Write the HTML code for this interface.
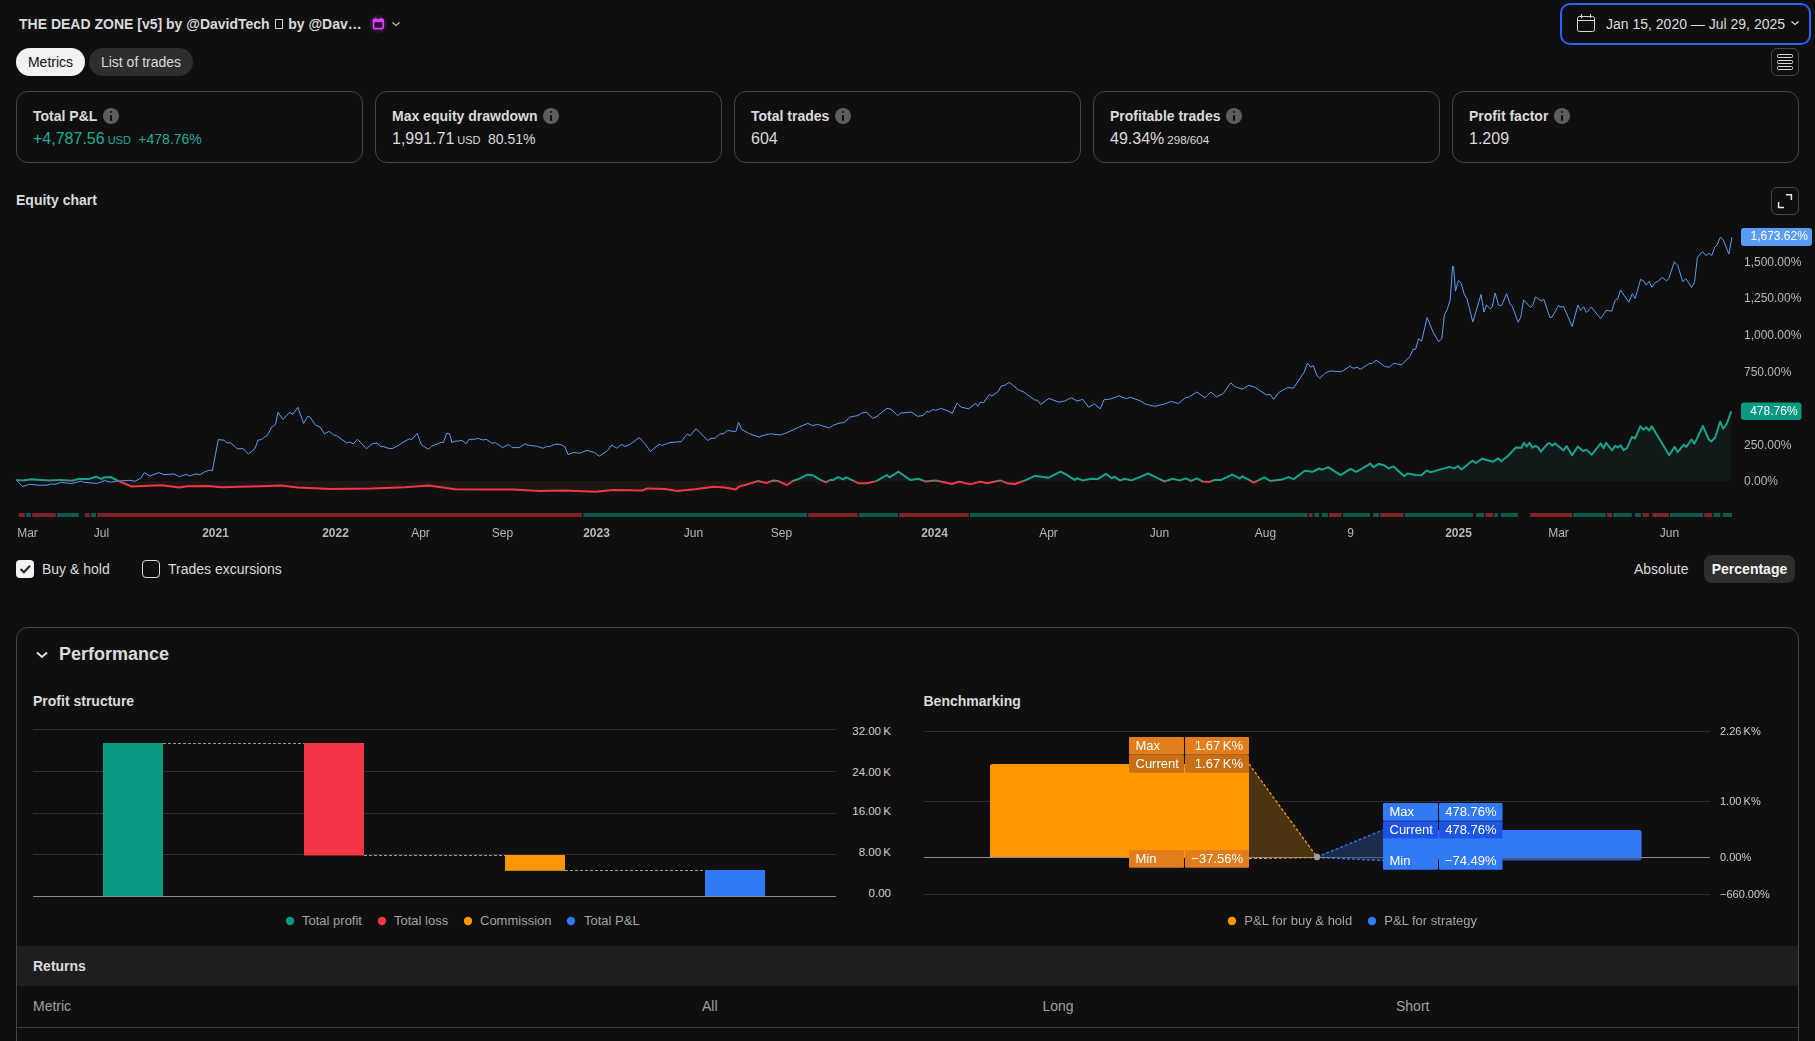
<!DOCTYPE html>
<html><head><meta charset="utf-8">
<style>
*{box-sizing:border-box;margin:0;padding:0}
html,body{width:1815px;height:1041px;overflow:hidden;background:#0f0f0f;color:#dbdbdb;font-family:"Liberation Sans",sans-serif;font-size:14px}
.a{position:absolute;white-space:nowrap}
.b{font-weight:bold}
.card{position:absolute;top:91px;width:347px;height:72px;border:1px solid #464646;border-radius:12px}
.card .t{position:absolute;left:16px;top:15px;font-weight:bold;font-size:14px;line-height:18px;color:#dbdbdb}
.card .v{position:absolute;left:16px;top:37px;font-size:16px;line-height:20px;color:#dbdbdb}
.info{display:inline-block;width:16px;height:16px;border-radius:50%;background:#5d5d5d;vertical-align:-3px;margin-left:6px;position:relative}
.info:before{content:"";position:absolute;left:7px;top:7px;width:2px;height:6px;background:#0f0f0f;border-radius:1px}
.info:after{content:"";position:absolute;left:7px;top:3px;width:2px;height:2px;background:#0f0f0f;border-radius:1px}
.usd{font-size:11px;margin-left:3px}
.pct{font-size:14px;margin-left:7.5px}
.card .green{color:#22ab94}
</style></head><body>
<!-- header -->
<div class="a b" style="left:19px;top:15px;font-size:14px;line-height:18px;color:#dbdbdb">THE DEAD ZONE [v5] by @DavidTech <span style="display:inline-block;width:8px;height:10px;border:1px solid #c8c8c8;margin:0 1px 0 1.8px"></span> by @Dav…</div>
<div class="a" style="left:369px;top:15px;width:18px;height:18px;border-radius:50%;background:#2b1534"></div>
<svg class="a" style="left:372px;top:17px" width="13" height="13" viewBox="0 0 13 13"><rect x="1.5" y="2.6" width="9.6" height="9" rx="1" fill="none" stroke="#e040fb" stroke-width="1.6"/><rect x="0.7" y="2" width="11.2" height="3.2" fill="#e040fb"/><rect x="2.8" y="0.8" width="1.4" height="2" fill="#e040fb"/><rect x="8.4" y="0.8" width="1.4" height="2" fill="#e040fb"/></svg>
<svg class="a" style="left:391px;top:20px" width="10" height="8" viewBox="0 0 10 8"><path d="M1.5 2.5 L5 5.5 L8.5 2.5" fill="none" stroke="#c0c0c0" stroke-width="1.3"/></svg>

<div class="a" style="left:1560px;top:3px;width:251px;height:42px;border:2px solid #2962ff;border-radius:10px"></div>
<svg class="a" style="left:1577px;top:14px" width="18" height="18" viewBox="0 0 18 18"><rect x="0.5" y="2.5" width="17" height="15" rx="2" fill="none" stroke="#dbdbdb" stroke-width="1"/><line x1="0.5" y1="6.5" x2="17.5" y2="6.5" stroke="#dbdbdb"/><line x1="4.5" y1="0" x2="4.5" y2="4" stroke="#dbdbdb"/><line x1="13.5" y1="0" x2="13.5" y2="4" stroke="#dbdbdb"/></svg>
<div class="a" style="left:1606px;top:15px;font-size:14px;line-height:18px">Jan 15, 2020 — Jul 29, 2025</div>
<svg class="a" style="left:1790px;top:19px" width="10" height="8" viewBox="0 0 10 8"><path d="M1.5 2.5 L5 5.5 L8.5 2.5" fill="none" stroke="#dbdbdb" stroke-width="1.2"/></svg>

<!-- tabs -->
<div class="a" style="left:16px;top:48px;width:69px;height:28px;border-radius:14px;background:#f2f2f2;color:#0f0f0f;line-height:28px;text-align:center">Metrics</div>
<div class="a" style="left:89px;top:48px;width:104px;height:28px;border-radius:14px;background:#2e2e2e;color:#dbdbdb;line-height:28px;text-align:center">List of trades</div>
<div class="a" style="left:1771px;top:48px;width:28px;height:28px;border:1px solid #474747;border-radius:6px"></div>
<svg class="a" style="left:1777px;top:54px" width="16" height="16" viewBox="0 0 16 16"><rect x="0.5" y="0.5" width="15" height="3" rx="1" fill="none" stroke="#dbdbdb"/><rect x="0.5" y="6.5" width="15" height="3" rx="1" fill="none" stroke="#dbdbdb"/><rect x="0.5" y="12.5" width="15" height="3" rx="1" fill="none" stroke="#dbdbdb"/></svg>

<!-- cards -->
<div class="card" style="left:16px"><div class="t">Total P&amp;L<span class="info"></span></div><div class="v green">+4,787.56<span class="usd">USD</span><span class="pct">+478.76%</span></div></div>
<div class="card" style="left:375px"><div class="t">Max equity drawdown<span class="info"></span></div><div class="v">1,991.71<span class="usd">USD</span><span class="pct">80.51%</span></div></div>
<div class="card" style="left:734px"><div class="t">Total trades<span class="info"></span></div><div class="v">604</div></div>
<div class="card" style="left:1093px"><div class="t">Profitable trades<span class="info"></span></div><div class="v">49.34%<span class="usd" style="font-size:11.6px">298/604</span></div></div>
<div class="card" style="left:1452px"><div class="t">Profit factor<span class="info"></span></div><div class="v">1.209</div></div>

<!-- equity chart title -->
<div class="a b" style="left:16px;top:191px;line-height:18px">Equity chart</div>
<div class="a" style="left:1771px;top:187px;width:28px;height:28px;border:1px solid #474747;border-radius:6px"></div>
<svg class="a" style="left:1777px;top:193px" width="16" height="16" viewBox="0 0 16 16"><path d="M1.6 9 V14.4 H7 M9 1.7 H14.4 V7" fill="none" stroke="#e8e8e8" stroke-width="1.5"/></svg>

<svg class="a" style="left:0;top:220px;will-change:transform" width="1815" height="330" viewBox="0 220 1815 330">
<defs><clipPath id="up"><rect x="0" y="0" width="1815" height="481.0"/></clipPath><clipPath id="dn"><rect x="0" y="481.0" width="1815" height="600"/></clipPath></defs>
<polygon points="16.3,479.9 23.2,480.6 31.2,479.3 49.7,480.6 60.2,479.9 72.1,480.7 78.8,478.9 89.3,478.9 96.0,476.7 101.2,478.9 103.9,477.5 110.5,477.0 118.4,481.0 131.6,486.5 162.0,485.2 179.3,487.6 187.0,486.3 208.0,485.9 221.6,487.2 250.0,486.5 281.0,485.6 297.9,487.6 331.0,488.9 372.0,488.4 405.0,487.2 428.4,485.6 455.0,489.2 488.0,489.5 512.7,489.5 540.0,490.9 563.0,490.5 596.0,491.7 612.6,490.0 642.4,490.5 647.4,488.4 665.5,488.9 677.0,490.9 695.3,489.2 713.5,486.7 725.0,487.6 735.8,489.5 739.1,486.4 744.9,485.1 758.0,481.0 766.4,483.0 773.0,480.6 778.0,481.0 787.0,485.1 792.8,481.0 797.8,479.3 807.7,474.7 812.6,475.2 820.9,480.1 825.9,482.3 830.0,480.1 833.2,479.9 838.2,477.1 843.1,479.4 846.4,477.4 853.1,480.7 858.0,483.2 867.1,483.2 876.2,481.1 886.9,475.0 889.4,477.4 898.5,471.7 910.1,479.9 918.3,478.8 925.8,481.6 935.7,480.4 952.2,484.0 958.8,481.6 970.4,484.4 980.3,481.6 986.9,483.2 1000.2,480.4 1006.8,483.2 1015.0,484.0 1025.0,480.4 1034.9,475.8 1048.1,477.8 1060.5,471.7 1066.3,474.5 1074.5,479.9 1077.0,478.3 1082.8,480.4 1091.1,478.8 1097.7,479.1 1106.0,473.8 1111.7,478.3 1114.2,476.6 1120.0,480.4 1124.9,478.8 1131.5,480.4 1141.4,476.3 1148.0,473.5 1153.0,475.8 1164.5,481.5 1172.8,478.8 1179.4,480.4 1186.0,478.4 1191.0,481.0 1196.8,478.4 1202.6,481.5 1209.2,482.0 1214.1,480.1 1220.7,480.1 1232.3,474.6 1239.8,478.4 1242.2,476.3 1253.8,482.5 1264.5,477.4 1270.3,481.0 1281.9,479.6 1288.5,477.1 1293.5,479.1 1305.0,470.8 1312.5,471.8 1319.1,468.5 1322.4,469.7 1328.2,467.2 1340.6,475.1 1350.5,468.8 1356.3,471.8 1367.8,465.2 1370.3,463.6 1373.6,467.2 1378.6,463.9 1384.4,465.2 1388.5,468.5 1393.5,466.4 1404.2,476.3 1407.5,473.5 1415.9,474.9 1421.3,475.2 1426.8,470.6 1430.7,472.2 1439.7,469.6 1449.6,466.9 1454.1,468.4 1458.0,466.0 1461.5,469.6 1472.4,460.7 1475.9,463.0 1482.3,458.7 1493.2,461.7 1498.2,458.3 1501.2,461.3 1508.1,455.7 1516.0,447.4 1521.5,447.8 1524.0,442.8 1526.7,446.4 1529.4,442.8 1532.4,447.6 1535.4,445.8 1537.9,447.1 1540.8,451.6 1547.8,443.6 1549.3,443.1 1552.2,445.6 1555.2,443.4 1563.6,450.4 1566.6,446.1 1572.1,455.3 1577.9,446.4 1582.9,451.1 1586.4,449.8 1591.8,454.7 1600.7,443.4 1603.7,448.1 1606.2,442.8 1612.1,450.4 1615.1,445.8 1617.6,447.4 1620.6,445.4 1623.6,450.1 1627.0,448.1 1632.0,436.9 1635.0,438.5 1640.4,426.3 1643.4,429.6 1646.4,427.3 1649.3,430.5 1651.8,426.3 1669.2,455.3 1674.6,446.8 1677.6,452.1 1683.6,444.8 1686.5,446.6 1691.5,439.5 1694.5,443.6 1702.9,426.0 1708.8,439.5 1711.3,441.5 1715.3,437.2 1720.2,421.6 1723.2,428.6 1726.7,423.8 1731.2,411.4 1731.2,481.0 16.3,481.0" fill="#121a19" clip-path="url(#up)"/>
<polygon points="16.3,479.9 23.2,480.6 31.2,479.3 49.7,480.6 60.2,479.9 72.1,480.7 78.8,478.9 89.3,478.9 96.0,476.7 101.2,478.9 103.9,477.5 110.5,477.0 118.4,481.0 131.6,486.5 162.0,485.2 179.3,487.6 187.0,486.3 208.0,485.9 221.6,487.2 250.0,486.5 281.0,485.6 297.9,487.6 331.0,488.9 372.0,488.4 405.0,487.2 428.4,485.6 455.0,489.2 488.0,489.5 512.7,489.5 540.0,490.9 563.0,490.5 596.0,491.7 612.6,490.0 642.4,490.5 647.4,488.4 665.5,488.9 677.0,490.9 695.3,489.2 713.5,486.7 725.0,487.6 735.8,489.5 739.1,486.4 744.9,485.1 758.0,481.0 766.4,483.0 773.0,480.6 778.0,481.0 787.0,485.1 792.8,481.0 797.8,479.3 807.7,474.7 812.6,475.2 820.9,480.1 825.9,482.3 830.0,480.1 833.2,479.9 838.2,477.1 843.1,479.4 846.4,477.4 853.1,480.7 858.0,483.2 867.1,483.2 876.2,481.1 886.9,475.0 889.4,477.4 898.5,471.7 910.1,479.9 918.3,478.8 925.8,481.6 935.7,480.4 952.2,484.0 958.8,481.6 970.4,484.4 980.3,481.6 986.9,483.2 1000.2,480.4 1006.8,483.2 1015.0,484.0 1025.0,480.4 1034.9,475.8 1048.1,477.8 1060.5,471.7 1066.3,474.5 1074.5,479.9 1077.0,478.3 1082.8,480.4 1091.1,478.8 1097.7,479.1 1106.0,473.8 1111.7,478.3 1114.2,476.6 1120.0,480.4 1124.9,478.8 1131.5,480.4 1141.4,476.3 1148.0,473.5 1153.0,475.8 1164.5,481.5 1172.8,478.8 1179.4,480.4 1186.0,478.4 1191.0,481.0 1196.8,478.4 1202.6,481.5 1209.2,482.0 1214.1,480.1 1220.7,480.1 1232.3,474.6 1239.8,478.4 1242.2,476.3 1253.8,482.5 1264.5,477.4 1270.3,481.0 1281.9,479.6 1288.5,477.1 1293.5,479.1 1305.0,470.8 1312.5,471.8 1319.1,468.5 1322.4,469.7 1328.2,467.2 1340.6,475.1 1350.5,468.8 1356.3,471.8 1367.8,465.2 1370.3,463.6 1373.6,467.2 1378.6,463.9 1384.4,465.2 1388.5,468.5 1393.5,466.4 1404.2,476.3 1407.5,473.5 1415.9,474.9 1421.3,475.2 1426.8,470.6 1430.7,472.2 1439.7,469.6 1449.6,466.9 1454.1,468.4 1458.0,466.0 1461.5,469.6 1472.4,460.7 1475.9,463.0 1482.3,458.7 1493.2,461.7 1498.2,458.3 1501.2,461.3 1508.1,455.7 1516.0,447.4 1521.5,447.8 1524.0,442.8 1526.7,446.4 1529.4,442.8 1532.4,447.6 1535.4,445.8 1537.9,447.1 1540.8,451.6 1547.8,443.6 1549.3,443.1 1552.2,445.6 1555.2,443.4 1563.6,450.4 1566.6,446.1 1572.1,455.3 1577.9,446.4 1582.9,451.1 1586.4,449.8 1591.8,454.7 1600.7,443.4 1603.7,448.1 1606.2,442.8 1612.1,450.4 1615.1,445.8 1617.6,447.4 1620.6,445.4 1623.6,450.1 1627.0,448.1 1632.0,436.9 1635.0,438.5 1640.4,426.3 1643.4,429.6 1646.4,427.3 1649.3,430.5 1651.8,426.3 1669.2,455.3 1674.6,446.8 1677.6,452.1 1683.6,444.8 1686.5,446.6 1691.5,439.5 1694.5,443.6 1702.9,426.0 1708.8,439.5 1711.3,441.5 1715.3,437.2 1720.2,421.6 1723.2,428.6 1726.7,423.8 1731.2,411.4 1731.2,481.0 16.3,481.0" fill="#1c1615" clip-path="url(#dn)"/>
<polyline points="16.3,479.9 22.6,486.5 29.8,484.3 37.8,485.2 47.0,485.2 51.0,483.9 55.0,484.3 61.6,482.2 70.8,483.6 81.4,481.2 84.0,482.3 97.3,483.4 104.5,480.6 110.5,482.2 117.1,481.2 129.0,480.3 135.0,481.2 140.9,478.3 144.2,472.6 150.2,476.0 158.8,472.6 164.0,474.6 174.0,474.0 179.3,476.6 186.5,474.4 189.8,476.0 195.1,474.0 200.4,474.6 204.4,472.0 209.7,470.0 212.3,470.9 218.3,439.6 224.2,440.2 226.9,442.9 230.8,442.9 237.4,448.8 243.3,448.7 248.3,454.0 254.9,448.7 258.2,440.0 261.5,439.6 264.8,436.8 267.3,435.5 271.4,427.7 275.5,424.4 278.0,412.4 283.0,419.5 289.6,412.4 292.9,414.3 297.9,407.4 303.6,423.4 307.8,416.2 310.2,417.3 315.2,424.8 320.2,427.2 324.3,433.8 329.3,431.4 333.4,434.7 337.5,436.3 346.6,442.9 349.9,442.1 353.2,443.9 357.4,439.3 366.4,448.7 372.2,443.8 377.2,442.9 380.5,446.7 383.8,446.6 387.9,448.2 392.1,448.6 397.9,445.9 401.2,443.3 409.4,438.8 411.9,439.6 417.2,433.3 421.0,443.8 423.5,446.2 428.4,449.2 431.7,446.2 441.7,442.1 443.3,442.9 446.6,433.3 449.6,433.8 451.9,442.6 454.9,441.3 462.3,440.5 466.1,443.8 468.9,439.3 474.7,439.3 478.0,438.3 482.9,440.0 486.3,439.3 492.1,443.3 495.4,442.6 502.8,447.6 508.6,444.3 511.9,447.6 519.3,447.6 525.1,443.8 529.3,445.4 536.6,446.2 542.9,448.2 546.5,446.6 550.7,446.2 554.8,444.3 559.8,444.3 564.7,446.6 568.0,454.5 573.8,452.5 579.6,453.2 587.0,450.4 594.5,452.5 599.4,456.2 607.7,450.4 611.8,444.9 616.8,448.2 621.7,444.3 625.0,446.6 630.8,443.8 639.1,437.6 644.9,443.3 650.3,451.5 658.9,444.3 662.2,445.4 669.7,442.6 681.2,441.6 687.0,434.3 690.3,435.5 696.1,428.6 707.7,440.5 711.0,438.3 715.1,438.3 719.3,434.3 724.2,433.3 727.5,430.5 735.8,431.7 738.6,422.3 741.9,429.7 749.8,433.8 758.9,437.1 763.0,435.5 770.5,433.8 780.4,435.0 786.2,433.0 797.0,428.0 807.7,423.4 812.6,425.6 817.6,424.4 829.1,427.9 833.2,425.4 839.0,423.2 844.0,422.6 849.8,417.1 858.0,415.5 861.3,413.3 866.3,412.1 872.9,418.3 877.0,416.3 886.9,408.3 891.1,409.3 897.7,415.5 901.0,413.0 911.7,412.1 917.5,416.3 923.3,415.5 926.6,411.3 929.1,412.1 933.2,409.3 935.7,410.5 940.7,408.3 948.1,411.0 952.2,413.3 957.2,403.1 961.3,407.2 968.8,408.8 975.4,403.4 977.9,406.4 980.3,402.2 983.6,402.7 989.4,394.5 991.9,396.1 998.5,391.2 1001.0,386.2 1005.1,385.2 1009.3,382.4 1018.3,389.8 1023.3,391.8 1034.9,400.1 1037.4,400.1 1040.7,404.4 1048.9,398.4 1058.8,402.2 1064.6,401.1 1071.2,397.8 1077.0,401.1 1082.8,399.4 1088.6,407.2 1094.4,403.9 1100.2,408.8 1104.3,399.4 1109.3,399.4 1119.1,395.8 1125.7,398.6 1130.7,397.4 1139.8,400.7 1145.5,404.0 1154.6,406.4 1164.5,404.0 1171.2,401.4 1178.6,403.6 1185.2,397.8 1189.3,396.9 1196.8,392.0 1205.0,397.8 1210.8,392.0 1216.6,396.9 1223.2,393.6 1230.7,382.9 1234.8,386.5 1242.2,389.2 1248.8,385.4 1254.6,387.0 1266.2,394.8 1270.3,394.5 1273.6,399.4 1279.4,392.0 1287.7,387.5 1293.5,388.2 1304.2,372.1 1307.5,363.1 1310.8,367.2 1313.3,365.5 1316.6,375.0 1319.9,378.3 1324.9,373.3 1329.8,371.0 1341.4,371.7 1349.7,366.4 1353.8,368.3 1357.1,367.2 1360.4,369.3 1368.7,363.9 1372.8,363.1 1376.1,360.1 1385.2,366.7 1389.3,367.2 1393.5,363.4 1401.7,364.7 1410.1,356.4 1413.0,349.5 1415.6,349.2 1418.7,338.7 1421.6,341.2 1427.1,317.5 1433.1,332.2 1438.6,341.6 1441.8,338.7 1444.4,314.9 1447.3,309.2 1450.2,299.8 1452.6,266.2 1453.6,266.7 1455.5,291.2 1458.4,280.6 1461.2,283.2 1464.1,294.0 1467.0,298.8 1472.8,322.1 1481.0,294.5 1483.9,312.1 1486.5,305.1 1490.1,308.9 1492.2,307.0 1495.1,293.0 1498.7,305.1 1501.6,305.6 1506.6,293.6 1510.2,304.1 1512.4,306.6 1518.2,322.4 1520.8,317.1 1523.6,299.8 1530.4,307.4 1532.6,305.6 1535.5,296.9 1541.2,300.8 1543.8,299.4 1549.9,317.5 1552.0,317.1 1558.5,305.6 1560.7,307.0 1563.6,306.6 1572.2,326.5 1577.8,305.1 1580.6,310.3 1583.6,306.9 1586.4,312.4 1591.3,307.1 1600.6,318.6 1606.3,310.3 1611.7,311.2 1615.0,300.5 1617.8,298.8 1620.5,290.1 1628.8,302.2 1632.3,293.6 1635.1,298.6 1640.6,279.4 1643.6,280.9 1646.3,285.2 1649.0,281.3 1651.9,287.3 1655.3,282.6 1657.6,281.5 1662.2,277.5 1666.6,280.9 1668.9,278.3 1674.3,261.7 1677.8,265.6 1682.7,281.7 1685.9,278.6 1691.6,287.5 1694.5,282.6 1697.4,257.3 1702.6,251.5 1706.0,255.6 1708.9,253.2 1711.8,255.6 1714.7,247.1 1717.0,245.2 1720.4,237.1 1723.3,240.0 1728.9,254.1 1732.0,237.1" fill="none" stroke="#5b9cf6" stroke-width="1" stroke-linejoin="round"/>
<polyline points="16.3,479.9 23.2,480.6 31.2,479.3 49.7,480.6 60.2,479.9 72.1,480.7 78.8,478.9 89.3,478.9 96.0,476.7 101.2,478.9 103.9,477.5 110.5,477.0 118.4,481.0 131.6,486.5 162.0,485.2 179.3,487.6 187.0,486.3 208.0,485.9 221.6,487.2 250.0,486.5 281.0,485.6 297.9,487.6 331.0,488.9 372.0,488.4 405.0,487.2 428.4,485.6 455.0,489.2 488.0,489.5 512.7,489.5 540.0,490.9 563.0,490.5 596.0,491.7 612.6,490.0 642.4,490.5 647.4,488.4 665.5,488.9 677.0,490.9 695.3,489.2 713.5,486.7 725.0,487.6 735.8,489.5 739.1,486.4 744.9,485.1 758.0,481.0 766.4,483.0 773.0,480.6 778.0,481.0 787.0,485.1 792.8,481.0 797.8,479.3 807.7,474.7 812.6,475.2 820.9,480.1 825.9,482.3 830.0,480.1 833.2,479.9 838.2,477.1 843.1,479.4 846.4,477.4 853.1,480.7 858.0,483.2 867.1,483.2 876.2,481.1 886.9,475.0 889.4,477.4 898.5,471.7 910.1,479.9 918.3,478.8 925.8,481.6 935.7,480.4 952.2,484.0 958.8,481.6 970.4,484.4 980.3,481.6 986.9,483.2 1000.2,480.4 1006.8,483.2 1015.0,484.0 1025.0,480.4 1034.9,475.8 1048.1,477.8 1060.5,471.7 1066.3,474.5 1074.5,479.9 1077.0,478.3 1082.8,480.4 1091.1,478.8 1097.7,479.1 1106.0,473.8 1111.7,478.3 1114.2,476.6 1120.0,480.4 1124.9,478.8 1131.5,480.4 1141.4,476.3 1148.0,473.5 1153.0,475.8 1164.5,481.5 1172.8,478.8 1179.4,480.4 1186.0,478.4 1191.0,481.0 1196.8,478.4 1202.6,481.5 1209.2,482.0 1214.1,480.1 1220.7,480.1 1232.3,474.6 1239.8,478.4 1242.2,476.3 1253.8,482.5 1264.5,477.4 1270.3,481.0 1281.9,479.6 1288.5,477.1 1293.5,479.1 1305.0,470.8 1312.5,471.8 1319.1,468.5 1322.4,469.7 1328.2,467.2 1340.6,475.1 1350.5,468.8 1356.3,471.8 1367.8,465.2 1370.3,463.6 1373.6,467.2 1378.6,463.9 1384.4,465.2 1388.5,468.5 1393.5,466.4 1404.2,476.3 1407.5,473.5 1415.9,474.9 1421.3,475.2 1426.8,470.6 1430.7,472.2 1439.7,469.6 1449.6,466.9 1454.1,468.4 1458.0,466.0 1461.5,469.6 1472.4,460.7 1475.9,463.0 1482.3,458.7 1493.2,461.7 1498.2,458.3 1501.2,461.3 1508.1,455.7 1516.0,447.4 1521.5,447.8 1524.0,442.8 1526.7,446.4 1529.4,442.8 1532.4,447.6 1535.4,445.8 1537.9,447.1 1540.8,451.6 1547.8,443.6 1549.3,443.1 1552.2,445.6 1555.2,443.4 1563.6,450.4 1566.6,446.1 1572.1,455.3 1577.9,446.4 1582.9,451.1 1586.4,449.8 1591.8,454.7 1600.7,443.4 1603.7,448.1 1606.2,442.8 1612.1,450.4 1615.1,445.8 1617.6,447.4 1620.6,445.4 1623.6,450.1 1627.0,448.1 1632.0,436.9 1635.0,438.5 1640.4,426.3 1643.4,429.6 1646.4,427.3 1649.3,430.5 1651.8,426.3 1669.2,455.3 1674.6,446.8 1677.6,452.1 1683.6,444.8 1686.5,446.6 1691.5,439.5 1694.5,443.6 1702.9,426.0 1708.8,439.5 1711.3,441.5 1715.3,437.2 1720.2,421.6 1723.2,428.6 1726.7,423.8 1731.2,411.4" fill="none" stroke="#14a48b" stroke-width="2" stroke-linejoin="round" clip-path="url(#up)"/>
<polyline points="16.3,479.9 23.2,480.6 31.2,479.3 49.7,480.6 60.2,479.9 72.1,480.7 78.8,478.9 89.3,478.9 96.0,476.7 101.2,478.9 103.9,477.5 110.5,477.0 118.4,481.0 131.6,486.5 162.0,485.2 179.3,487.6 187.0,486.3 208.0,485.9 221.6,487.2 250.0,486.5 281.0,485.6 297.9,487.6 331.0,488.9 372.0,488.4 405.0,487.2 428.4,485.6 455.0,489.2 488.0,489.5 512.7,489.5 540.0,490.9 563.0,490.5 596.0,491.7 612.6,490.0 642.4,490.5 647.4,488.4 665.5,488.9 677.0,490.9 695.3,489.2 713.5,486.7 725.0,487.6 735.8,489.5 739.1,486.4 744.9,485.1 758.0,481.0 766.4,483.0 773.0,480.6 778.0,481.0 787.0,485.1 792.8,481.0 797.8,479.3 807.7,474.7 812.6,475.2 820.9,480.1 825.9,482.3 830.0,480.1 833.2,479.9 838.2,477.1 843.1,479.4 846.4,477.4 853.1,480.7 858.0,483.2 867.1,483.2 876.2,481.1 886.9,475.0 889.4,477.4 898.5,471.7 910.1,479.9 918.3,478.8 925.8,481.6 935.7,480.4 952.2,484.0 958.8,481.6 970.4,484.4 980.3,481.6 986.9,483.2 1000.2,480.4 1006.8,483.2 1015.0,484.0 1025.0,480.4 1034.9,475.8 1048.1,477.8 1060.5,471.7 1066.3,474.5 1074.5,479.9 1077.0,478.3 1082.8,480.4 1091.1,478.8 1097.7,479.1 1106.0,473.8 1111.7,478.3 1114.2,476.6 1120.0,480.4 1124.9,478.8 1131.5,480.4 1141.4,476.3 1148.0,473.5 1153.0,475.8 1164.5,481.5 1172.8,478.8 1179.4,480.4 1186.0,478.4 1191.0,481.0 1196.8,478.4 1202.6,481.5 1209.2,482.0 1214.1,480.1 1220.7,480.1 1232.3,474.6 1239.8,478.4 1242.2,476.3 1253.8,482.5 1264.5,477.4 1270.3,481.0 1281.9,479.6 1288.5,477.1 1293.5,479.1 1305.0,470.8 1312.5,471.8 1319.1,468.5 1322.4,469.7 1328.2,467.2 1340.6,475.1 1350.5,468.8 1356.3,471.8 1367.8,465.2 1370.3,463.6 1373.6,467.2 1378.6,463.9 1384.4,465.2 1388.5,468.5 1393.5,466.4 1404.2,476.3 1407.5,473.5 1415.9,474.9 1421.3,475.2 1426.8,470.6 1430.7,472.2 1439.7,469.6 1449.6,466.9 1454.1,468.4 1458.0,466.0 1461.5,469.6 1472.4,460.7 1475.9,463.0 1482.3,458.7 1493.2,461.7 1498.2,458.3 1501.2,461.3 1508.1,455.7 1516.0,447.4 1521.5,447.8 1524.0,442.8 1526.7,446.4 1529.4,442.8 1532.4,447.6 1535.4,445.8 1537.9,447.1 1540.8,451.6 1547.8,443.6 1549.3,443.1 1552.2,445.6 1555.2,443.4 1563.6,450.4 1566.6,446.1 1572.1,455.3 1577.9,446.4 1582.9,451.1 1586.4,449.8 1591.8,454.7 1600.7,443.4 1603.7,448.1 1606.2,442.8 1612.1,450.4 1615.1,445.8 1617.6,447.4 1620.6,445.4 1623.6,450.1 1627.0,448.1 1632.0,436.9 1635.0,438.5 1640.4,426.3 1643.4,429.6 1646.4,427.3 1649.3,430.5 1651.8,426.3 1669.2,455.3 1674.6,446.8 1677.6,452.1 1683.6,444.8 1686.5,446.6 1691.5,439.5 1694.5,443.6 1702.9,426.0 1708.8,439.5 1711.3,441.5 1715.3,437.2 1720.2,421.6 1723.2,428.6 1726.7,423.8 1731.2,411.4" fill="none" stroke="#f23645" stroke-width="2" stroke-linejoin="round" clip-path="url(#dn)"/>
<rect x="18.8" y="513" width="6.0" height="4" fill="#7e2229"/>
<rect x="26.0" y="513" width="5.0" height="4" fill="#0c5a4c"/>
<rect x="32.2" y="513" width="23.6" height="4" fill="#7e2229"/>
<rect x="57.0" y="513" width="21.8" height="4" fill="#0c5a4c"/>
<rect x="84.8" y="513" width="5.0" height="4" fill="#7e2229"/>
<rect x="91.0" y="513" width="5.0" height="4" fill="#0c5a4c"/>
<rect x="97.2" y="513" width="484.6" height="4" fill="#7e2229"/>
<rect x="583.3" y="513" width="223.7" height="4" fill="#0c5a4c"/>
<rect x="808.2" y="513" width="49.6" height="4" fill="#7e2229"/>
<rect x="859.0" y="513" width="38.9" height="4" fill="#0c5a4c"/>
<rect x="899.1" y="513" width="69.7" height="4" fill="#7e2229"/>
<rect x="970.0" y="513" width="337.7" height="4" fill="#0c5a4c"/>
<rect x="1309.0" y="513" width="3.7" height="4" fill="#7e2229"/>
<rect x="1314.2" y="513" width="5.0" height="4" fill="#0c5a4c"/>
<rect x="1321.9" y="513" width="6.0" height="4" fill="#0c5a4c"/>
<rect x="1329.1" y="513" width="12.6" height="4" fill="#7e2229"/>
<rect x="1343.0" y="513" width="27.0" height="4" fill="#0c5a4c"/>
<rect x="1373.2" y="513" width="5.7" height="4" fill="#0c5a4c"/>
<rect x="1380.2" y="513" width="23.5" height="4" fill="#7e2229"/>
<rect x="1405.0" y="513" width="67.9" height="4" fill="#0c5a4c"/>
<rect x="1476.1" y="513" width="8.0" height="4" fill="#0c5a4c"/>
<rect x="1485.3" y="513" width="7.7" height="4" fill="#7e2229"/>
<rect x="1494.2" y="513" width="3.8" height="4" fill="#0c5a4c"/>
<rect x="1500.9" y="513" width="16.9" height="4" fill="#0c5a4c"/>
<rect x="1530.2" y="513" width="41.9" height="4" fill="#7e2229"/>
<rect x="1573.3" y="513" width="32.5" height="4" fill="#0c5a4c"/>
<rect x="1607.0" y="513" width="5.0" height="4" fill="#7e2229"/>
<rect x="1613.2" y="513" width="18.6" height="4" fill="#0c5a4c"/>
<rect x="1635.1" y="513" width="5.9" height="4" fill="#0c5a4c"/>
<rect x="1642.3" y="513" width="6.7" height="4" fill="#7e2229"/>
<rect x="1652.2" y="513" width="16.6" height="4" fill="#7e2229"/>
<rect x="1670.0" y="513" width="33.0" height="4" fill="#0c5a4c"/>
<rect x="1704.2" y="513" width="8.0" height="4" fill="#7e2229"/>
<rect x="1713.4" y="513" width="7.0" height="4" fill="#0c5a4c"/>
<rect x="1722.8" y="513" width="9.2" height="4" fill="#0c5a4c"/>
<text x="27.5" y="537" text-anchor="middle" font-size="12" fill="#b8b8b8">Mar</text>
<text x="101.5" y="537" text-anchor="middle" font-size="12" fill="#b8b8b8">Jul</text>
<text x="215.5" y="537" text-anchor="middle" font-size="12" fill="#b8b8b8" font-weight="bold">2021</text>
<text x="335.5" y="537" text-anchor="middle" font-size="12" fill="#b8b8b8" font-weight="bold">2022</text>
<text x="420.5" y="537" text-anchor="middle" font-size="12" fill="#b8b8b8">Apr</text>
<text x="502.5" y="537" text-anchor="middle" font-size="12" fill="#b8b8b8">Sep</text>
<text x="596.5" y="537" text-anchor="middle" font-size="12" fill="#b8b8b8" font-weight="bold">2023</text>
<text x="693.5" y="537" text-anchor="middle" font-size="12" fill="#b8b8b8">Jun</text>
<text x="781.5" y="537" text-anchor="middle" font-size="12" fill="#b8b8b8">Sep</text>
<text x="934.5" y="537" text-anchor="middle" font-size="12" fill="#b8b8b8" font-weight="bold">2024</text>
<text x="1048.5" y="537" text-anchor="middle" font-size="12" fill="#b8b8b8">Apr</text>
<text x="1159.5" y="537" text-anchor="middle" font-size="12" fill="#b8b8b8">Jun</text>
<text x="1265.5" y="537" text-anchor="middle" font-size="12" fill="#b8b8b8">Aug</text>
<text x="1350.5" y="537" text-anchor="middle" font-size="12" fill="#b8b8b8">9</text>
<text x="1458.5" y="537" text-anchor="middle" font-size="12" fill="#b8b8b8" font-weight="bold">2025</text>
<text x="1558.5" y="537" text-anchor="middle" font-size="12" fill="#b8b8b8">Mar</text>
<text x="1669.5" y="537" text-anchor="middle" font-size="12" fill="#b8b8b8">Jun</text>
<text x="1744" y="265.7" font-size="12" fill="#b8b8b8">1,500.00%</text>
<text x="1744" y="301.9" font-size="12" fill="#b8b8b8">1,250.00%</text>
<text x="1744" y="339" font-size="12" fill="#b8b8b8">1,000.00%</text>
<text x="1744" y="376.2" font-size="12" fill="#b8b8b8">750.00%</text>
<text x="1744" y="449.2" font-size="12" fill="#b8b8b8">250.00%</text>
<text x="1744" y="485" font-size="12" fill="#b8b8b8">0.00%</text>
<rect x="1741" y="228" width="71" height="18" rx="3" fill="#5b9cf6"/>
<text x="1750.5" y="240.3" font-size="12" fill="#ffffff">1,673.62%</text>
<rect x="1741" y="402.5" width="60.5" height="17.5" rx="3" fill="#089981"/>
<text x="1750.2" y="414.5" font-size="12" fill="#ffffff">478.76%</text>
</svg>

<!-- checkboxes -->
<div class="a" style="left:16px;top:560px;width:18px;height:18px;border-radius:4px;background:#f2f2f2"></div>
<svg class="a" style="left:16px;top:560px" width="18" height="18" viewBox="0 0 18 18"><path d="M4.6 9 L7.9 12.3 L14 5.8" fill="none" stroke="#262626" stroke-width="2.1"/></svg>
<div class="a" style="left:42px;top:560px;line-height:18px">Buy &amp; hold</div>
<div class="a" style="left:142px;top:560px;width:18px;height:18px;border-radius:4px;border:1px solid #dbdbdb"></div>
<div class="a" style="left:168px;top:560px;line-height:18px">Trades excursions</div>

<div class="a" style="left:1634px;top:560px;line-height:18px">Absolute</div>
<div class="a b" style="left:1704px;top:555px;width:91px;height:28px;border-radius:8px;background:#2e2e2e;line-height:28px;text-align:center;color:#f5f5f5">Percentage</div>

<!-- performance panel -->
<div class="a" style="left:16px;top:627px;width:1783px;height:500px;border:1px solid #464646;border-radius:12px"></div>
<svg class="a" style="left:35px;top:648.5px" width="14" height="12" viewBox="0 0 14 12"><path d="M2 3.5 L7 8 L12 3.5" fill="none" stroke="#e0e0e0" stroke-width="2"/></svg>
<div class="a b" style="left:59px;top:642.5px;font-size:18px;line-height:22px">Performance</div>

<div class="a b" style="left:33px;top:692px;line-height:18px">Profit structure</div>
<div class="a b" style="left:923.5px;top:692px;line-height:18px">Benchmarking</div>
<svg class="a" style="left:0;top:700px" width="1815" height="240" viewBox="0 700 1815 240">
<line x1="33" y1="729.5" x2="836" y2="729.5" stroke="#2e2e2e" stroke-width="1"/>
<line x1="33" y1="771.5" x2="836" y2="771.5" stroke="#2e2e2e" stroke-width="1"/>
<line x1="33" y1="813.5" x2="836" y2="813.5" stroke="#2e2e2e" stroke-width="1"/>
<line x1="33" y1="854.5" x2="836" y2="854.5" stroke="#2e2e2e" stroke-width="1"/>
<line x1="33" y1="896.5" x2="836" y2="896.5" stroke="#8c8c8c" stroke-width="1"/>
<rect x="103" y="743" width="60" height="153" fill="#089981"/>
<rect x="304" y="743" width="60" height="112.5" fill="#f23645"/>
<rect x="505" y="855" width="60" height="15.8" fill="#ff9800"/>
<rect x="705" y="870" width="60" height="26" fill="#3179f5"/>
<line x1="163" y1="743.5" x2="304" y2="743.5" stroke="#9a9a9a" stroke-width="1" stroke-dasharray="3 2"/>
<line x1="364" y1="855.5" x2="505" y2="855.5" stroke="#9a9a9a" stroke-width="1" stroke-dasharray="3 2"/>
<line x1="565" y1="870.5" x2="705" y2="870.5" stroke="#9a9a9a" stroke-width="1" stroke-dasharray="3 2"/>
<text x="891" y="734.6" text-anchor="end" font-size="11.5" fill="#cfcfcf">32.00 K</text>
<text x="891" y="775.8" text-anchor="end" font-size="11.5" fill="#cfcfcf">24.00 K</text>
<text x="891" y="815.4" text-anchor="end" font-size="11.5" fill="#cfcfcf">16.00 K</text>
<text x="891" y="856.4" text-anchor="end" font-size="11.5" fill="#cfcfcf">8.00 K</text>
<text x="891" y="896.5" text-anchor="end" font-size="11.5" fill="#cfcfcf">0.00</text>
<circle cx="290" cy="921" r="4.2" fill="#089981"/>
<text x="302" y="924.7" font-size="13" fill="#a3a3a3">Total profit</text>
<circle cx="382" cy="921" r="4.2" fill="#f23645"/>
<text x="394" y="924.7" font-size="13" fill="#a3a3a3">Total loss</text>
<circle cx="468" cy="921" r="4.2" fill="#ff9800"/>
<text x="480" y="924.7" font-size="13" fill="#a3a3a3">Commission</text>
<circle cx="571" cy="921" r="4.2" fill="#3179f5"/>
<text x="584" y="924.7" font-size="13" fill="#a3a3a3">Total P&amp;L</text>
</svg>
<svg class="a" style="left:0;top:700px;will-change:transform" width="1815" height="240" viewBox="0 700 1815 240">
<line x1="924" y1="731.5" x2="1710" y2="731.5" stroke="#2e2e2e" stroke-width="1"/>
<line x1="924" y1="801.5" x2="1710" y2="801.5" stroke="#2e2e2e" stroke-width="1"/>
<line x1="924" y1="894.5" x2="1710" y2="894.5" stroke="#2e2e2e" stroke-width="1"/>
<line x1="924" y1="857.5" x2="1710" y2="857.5" stroke="#8c8c8c" stroke-width="1"/>
<text x="1720" y="735.3" font-size="11" fill="#cfcfcf">2.26 K%</text>
<text x="1720" y="805.2" font-size="11" fill="#cfcfcf">1.00 K%</text>
<text x="1720" y="861.4" font-size="11" fill="#cfcfcf">0.00%</text>
<text x="1720" y="898.0" font-size="11" fill="#cfcfcf">−660.00%</text>
<path d="M990 857 V766.5 Q990 764 992.5 764 H1249 V857 Z" fill="#ff9800"/>
<polygon points="1249,764 1317,857 1249,857" fill="#4b3411"/>
<line x1="1249" y1="764" x2="1317" y2="857" stroke="#ff9800" stroke-width="1.3" stroke-dasharray="3 2"/>
<line x1="1249" y1="858.5" x2="1317" y2="857.5" stroke="#ff9800" stroke-width="1.3" stroke-dasharray="3 2"/>
<path d="M1383 857 V832.5 Q1383 830 1385.5 830 H1639 Q1641.5 830 1641.5 832.5 V857 Z" fill="#3179f5"/>
<path d="M1383 857 V860.5 H1639 Q1641.5 860.5 1641.5 858 V857 Z" fill="#2a5bbd"/>
<polygon points="1317,857 1383,830 1383,860.5" fill="#1b2c4c"/>
<line x1="1317" y1="857" x2="1383" y2="830" stroke="#3179f5" stroke-width="1.3" stroke-dasharray="3 2"/>
<line x1="1317" y1="857.5" x2="1383" y2="860.5" stroke="#3179f5" stroke-width="1.3" stroke-dasharray="3 2"/>
<line x1="924" y1="857.5" x2="1710" y2="857.5" stroke="#8c8c8c" stroke-width="1" opacity="0.6"/>
<circle cx="1317" cy="857" r="3.2" fill="#9e9e9e"/>
<rect x="1129" y="737" width="55" height="17.7" rx="1" fill="#e17d1c"/>
<rect x="1185" y="737" width="64" height="17.7" rx="1" fill="#e17d1c"/>
<text x="1135.5" y="749.8" font-size="13" fill="#ffffff">Max</text>
<text x="1243" y="749.8" font-size="13" fill="#ffffff" text-anchor="end">1.67 K%</text>
<rect x="1129" y="755" width="55" height="17.7" rx="1" fill="#c86e14"/>
<rect x="1185" y="755" width="64" height="17.7" rx="1" fill="#c86e14"/>
<text x="1135.5" y="767.8" font-size="13" fill="#ffffff">Current</text>
<text x="1243" y="767.8" font-size="13" fill="#ffffff" text-anchor="end">1.67 K%</text>
<rect x="1129" y="850" width="55" height="17.7" rx="1" fill="#e17d1c"/>
<rect x="1185" y="850" width="64" height="17.7" rx="1" fill="#e17d1c"/>
<text x="1135.5" y="862.8" font-size="13" fill="#ffffff">Min</text>
<text x="1243" y="862.8" font-size="13" fill="#ffffff" text-anchor="end">−37.56%</text>
<rect x="1383" y="803" width="55" height="17.8" rx="1" fill="#3179f5"/>
<rect x="1439" y="803" width="63.5" height="17.8" rx="1" fill="#3179f5"/>
<text x="1389.5" y="815.8" font-size="13" fill="#ffffff">Max</text>
<text x="1496.5" y="815.8" font-size="13" fill="#ffffff" text-anchor="end">478.76%</text>
<rect x="1383" y="821.3" width="55" height="17.3" rx="1" fill="#1e54e6"/>
<rect x="1439" y="821.3" width="63.5" height="17.3" rx="1" fill="#1e54e6"/>
<text x="1389.5" y="833.8" font-size="13" fill="#ffffff">Current</text>
<text x="1496.5" y="833.8" font-size="13" fill="#ffffff" text-anchor="end">478.76%</text>
<rect x="1383" y="851.5" width="55" height="18.2" rx="1" fill="#3179f5"/>
<rect x="1439" y="851.5" width="63.5" height="18.2" rx="1" fill="#3179f5"/>
<text x="1389.5" y="864.5" font-size="13" fill="#ffffff">Min</text>
<text x="1496.5" y="864.5" font-size="13" fill="#ffffff" text-anchor="end">−74.49%</text>
</svg>
<svg class="a" style="left:0;top:700px" width="1815" height="240" viewBox="0 700 1815 240">
<circle cx="1232" cy="921" r="4.2" fill="#ff9800"/>
<text x="1244.3" y="924.7" font-size="13" fill="#a3a3a3">P&amp;L for buy &amp; hold</text>
<circle cx="1372" cy="921" r="4.2" fill="#3179f5"/>
<text x="1384.3" y="924.7" font-size="13" fill="#a3a3a3">P&amp;L for strategy</text>
</svg>

<!-- returns -->
<div class="a" style="left:17px;top:946px;width:1781px;height:40px;background:#1e1e1e"></div>
<div class="a b" style="left:33px;top:957px;line-height:18px">Returns</div>
<div class="a" style="left:33px;top:997px;line-height:18px;color:#a0a0a0">Metric</div>
<div class="a" style="left:702px;top:997px;line-height:18px;color:#a0a0a0">All</div>
<div class="a" style="left:1042.5px;top:997px;line-height:18px;color:#a0a0a0">Long</div>
<div class="a" style="left:1396px;top:997px;line-height:18px;color:#a0a0a0">Short</div>
<div class="a" style="left:17px;top:1027px;width:1781px;height:1px;background:#3d3d3d"></div>
</body></html>
